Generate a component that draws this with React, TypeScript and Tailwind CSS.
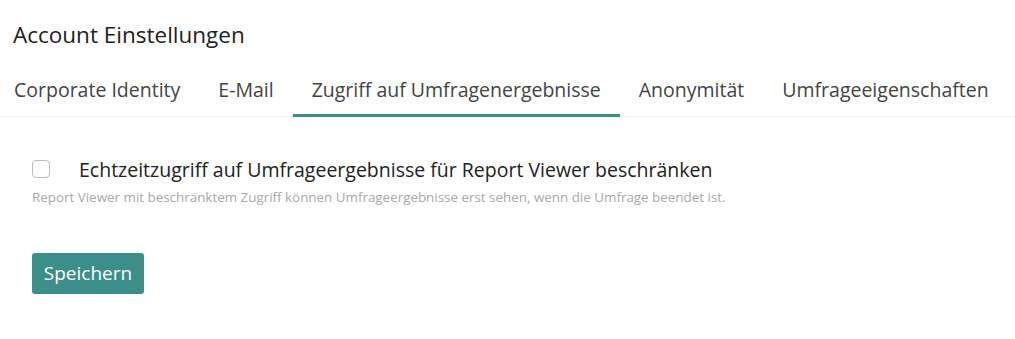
import React, { useState } from 'react';

const tabs = [
  'Corporate Identity',
  'E-Mail',
  'Zugriff auf Umfragenergebnisse',
  'Anonymität',
  'Umfrageeigenschaften',
];

const App: React.FC = () => {
  const [active, setActive] = useState(2);
  const [restricted, setRestricted] = useState(false);

  return (
    <div className="w-[1015px] h-[339px] bg-white text-[#222] font-['Open_Sans',sans-serif]">
      <h1 className="pl-[13px] pt-[20px] text-[22.5px] leading-[30px] text-[#222]">Account Einstellungen</h1>

      {/* Tabs */}
      <div className="mt-[20px] flex border-b border-[#eeeeee] -ml-[5px]">
        {tabs.map((tab, i) => (
          <button
            key={tab}
            onClick={() => setActive(i)}
            className={`px-[19px] pt-[7px] pb-[11px] text-[19.5px] leading-[26px] text-[#444] border-b-[3px] -mb-px ${
              i === active ? 'border-[#3a8f8b]' : 'border-transparent'
            }`}
          >
            {tab}
          </button>
        ))}
      </div>

      {/* Settings */}
      <div className="pl-[32px] pt-[40px]">
        <label className="flex items-start gap-[29px] cursor-pointer">
          <input
            type="checkbox"
            checked={restricted}
            onChange={() => setRestricted(!restricted)}
            className="mt-[3px] appearance-none shrink-0 w-[18px] h-[18px] border border-[#bbbbbb] rounded-[4px] bg-white checked:bg-[#3a8f8b]"
          />
          <span className="text-[19.5px] leading-[26px] text-[#222]">
            Echtzeitzugriff auf Umfrageergebnisse für Report Viewer beschränken
          </span>
        </label>
        <p className="mt-[5px] text-[13.4px] leading-[18px] text-[#aaaaaa]">
          Report Viewer mit beschränktem Zugriff können Umfrageergebnisse erst sehen, wenn die Umfrage beendet ist.
        </p>

        <button className="mt-[47px] h-[41px] w-[112px] rounded-[3px] bg-[#3a8f8b] text-white text-[19px]">
          Speichern
        </button>
      </div>
    </div>
  );
};

export default App;
